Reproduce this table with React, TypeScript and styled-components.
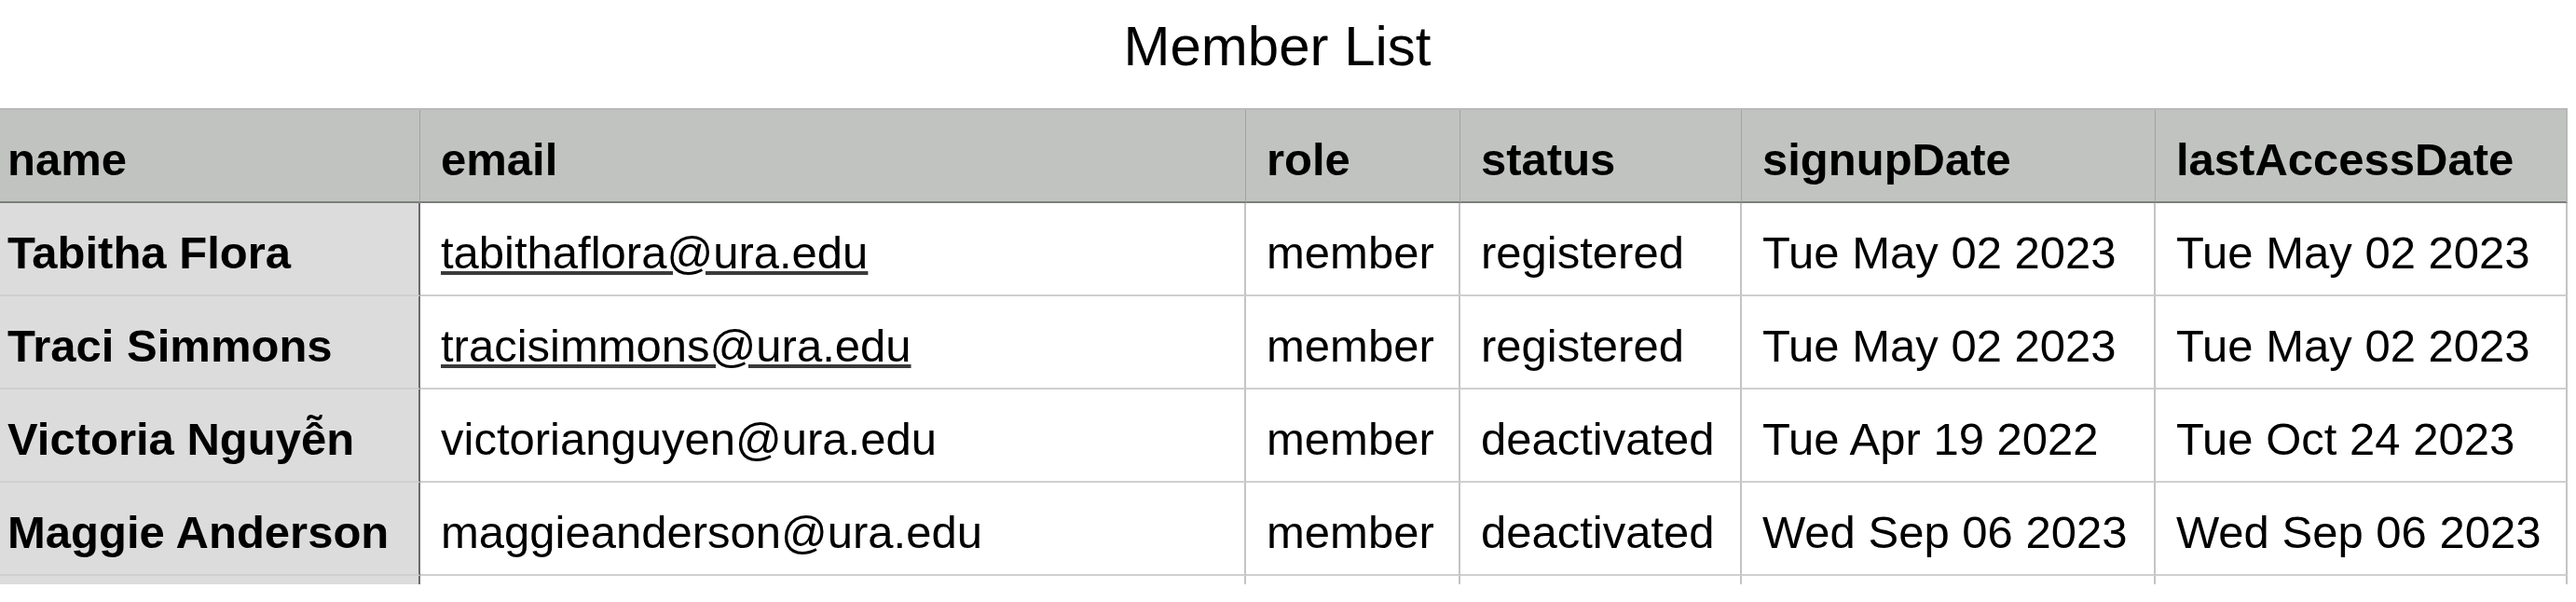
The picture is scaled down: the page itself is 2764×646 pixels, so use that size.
import React from "react";
import styled, { createGlobalStyle } from "styled-components";

const GlobalStyle = createGlobalStyle`
  html, body {
    margin: 0;
    padding: 0;
    background: #ffffff;
  }
  body {
    font-family: "Liberation Sans", Arial, Helvetica, sans-serif;
    color: #000000;
  }
`;

const Page = styled.div`
  width: 2769px;
  margin-left: -14px;
  display: flex;
  flex-direction: column;
`;

const Title = styled.h1`
  margin: 0;
  padding-top: 15px;
  margin-bottom: 32px;
  font-size: 60px;
  line-height: 69px;
  font-weight: 400;
  text-align: center;
`;

const Clip = styled.div`
  height: 511px;
  overflow: hidden;
`;

const Table = styled.table`
  width: 2769px;
  table-layout: fixed;
  border-collapse: separate;
  border-spacing: 0;
  border-top: 2px solid #b9b9b9;
  font-size: 49px;
`;

const HeadCell = styled.th<{ $first?: boolean }>`
  box-sizing: border-box;
  background: #c1c3c1;
  font-weight: 700;
  text-align: left;
  white-space: nowrap;
  line-height: 56px;
  padding: 25px 22px 17px;
  border-bottom: 2px solid #7c7e7c;
  border-right: 1px solid #a2a4a2;
  &:last-child {
    border-right: 2px solid #b9b9b9;
  }
`;

const Cell = styled.td<{ $name?: boolean }>`
  box-sizing: border-box;
  background: ${(p) => (p.$name ? "#dcdcdc" : "#ffffff")};
  font-weight: ${(p) => (p.$name ? 700 : 400)};
  white-space: nowrap;
  line-height: 56px;
  padding: 25px 22px 17px;
  border-bottom: 2px solid #cfcfcf;
  border-right: ${(p) => (p.$name ? "2px solid #6a6a6a" : "2px solid #c4c4c4")};
`;

const Link = styled.a`
  color: #000000;
  text-decoration: underline;
  text-decoration-color: #3a3a3a;
`;

type Member = {
  name: string;
  email: string;
  linked: boolean;
  role: string;
  status: string;
  signupDate: string;
  lastAccessDate: string;
};

const members: Member[] = [
  {
    name: "Tabitha Flora",
    email: "tabithaflora@ura.edu",
    linked: true,
    role: "member",
    status: "registered",
    signupDate: "Tue May 02 2023",
    lastAccessDate: "Tue May 02 2023",
  },
  {
    name: "Traci Simmons",
    email: "tracisimmons@ura.edu",
    linked: true,
    role: "member",
    status: "registered",
    signupDate: "Tue May 02 2023",
    lastAccessDate: "Tue May 02 2023",
  },
  {
    name: "Victoria Nguyễn",
    email: "victorianguyen@ura.edu",
    linked: false,
    role: "member",
    status: "deactivated",
    signupDate: "Tue Apr 19 2022",
    lastAccessDate: "Tue Oct 24 2023",
  },
  {
    name: "Maggie Anderson",
    email: "maggieanderson@ura.edu",
    linked: false,
    role: "member",
    status: "deactivated",
    signupDate: "Wed Sep 06 2023",
    lastAccessDate: "Wed Sep 06 2023",
  },
];

const columns = [
  { key: "name", width: 465 },
  { key: "email", width: 886 },
  { key: "role", width: 230 },
  { key: "status", width: 302 },
  { key: "signupDate", width: 444 },
  { key: "lastAccessDate", width: 442 },
];

export default function App() {
  return (
    <>
      <GlobalStyle />
      <Page>
        <Title>Member List</Title>
        <Clip>
          <Table>
            <colgroup>
              {columns.map((c) => (
                <col key={c.key} style={{ width: c.width }} />
              ))}
            </colgroup>
            <thead>
              <tr>
                {columns.map((c) => (
                  <HeadCell key={c.key}>{c.key}</HeadCell>
                ))}
              </tr>
            </thead>
            <tbody>
              {members.map((m) => (
                <tr key={m.email}>
                  <Cell $name>{m.name}</Cell>
                  <Cell>
                    {m.linked ? <Link href={`mailto:${m.email}`}>{m.email}</Link> : m.email}
                  </Cell>
                  <Cell>{m.role}</Cell>
                  <Cell>{m.status}</Cell>
                  <Cell>{m.signupDate}</Cell>
                  <Cell>{m.lastAccessDate}</Cell>
                </tr>
              ))}
              <tr>
                <Cell $name>&nbsp;</Cell>
                <Cell>&nbsp;</Cell>
                <Cell>&nbsp;</Cell>
                <Cell>&nbsp;</Cell>
                <Cell>&nbsp;</Cell>
                <Cell>&nbsp;</Cell>
              </tr>
            </tbody>
          </Table>
        </Clip>
      </Page>
    </>
  );
}
